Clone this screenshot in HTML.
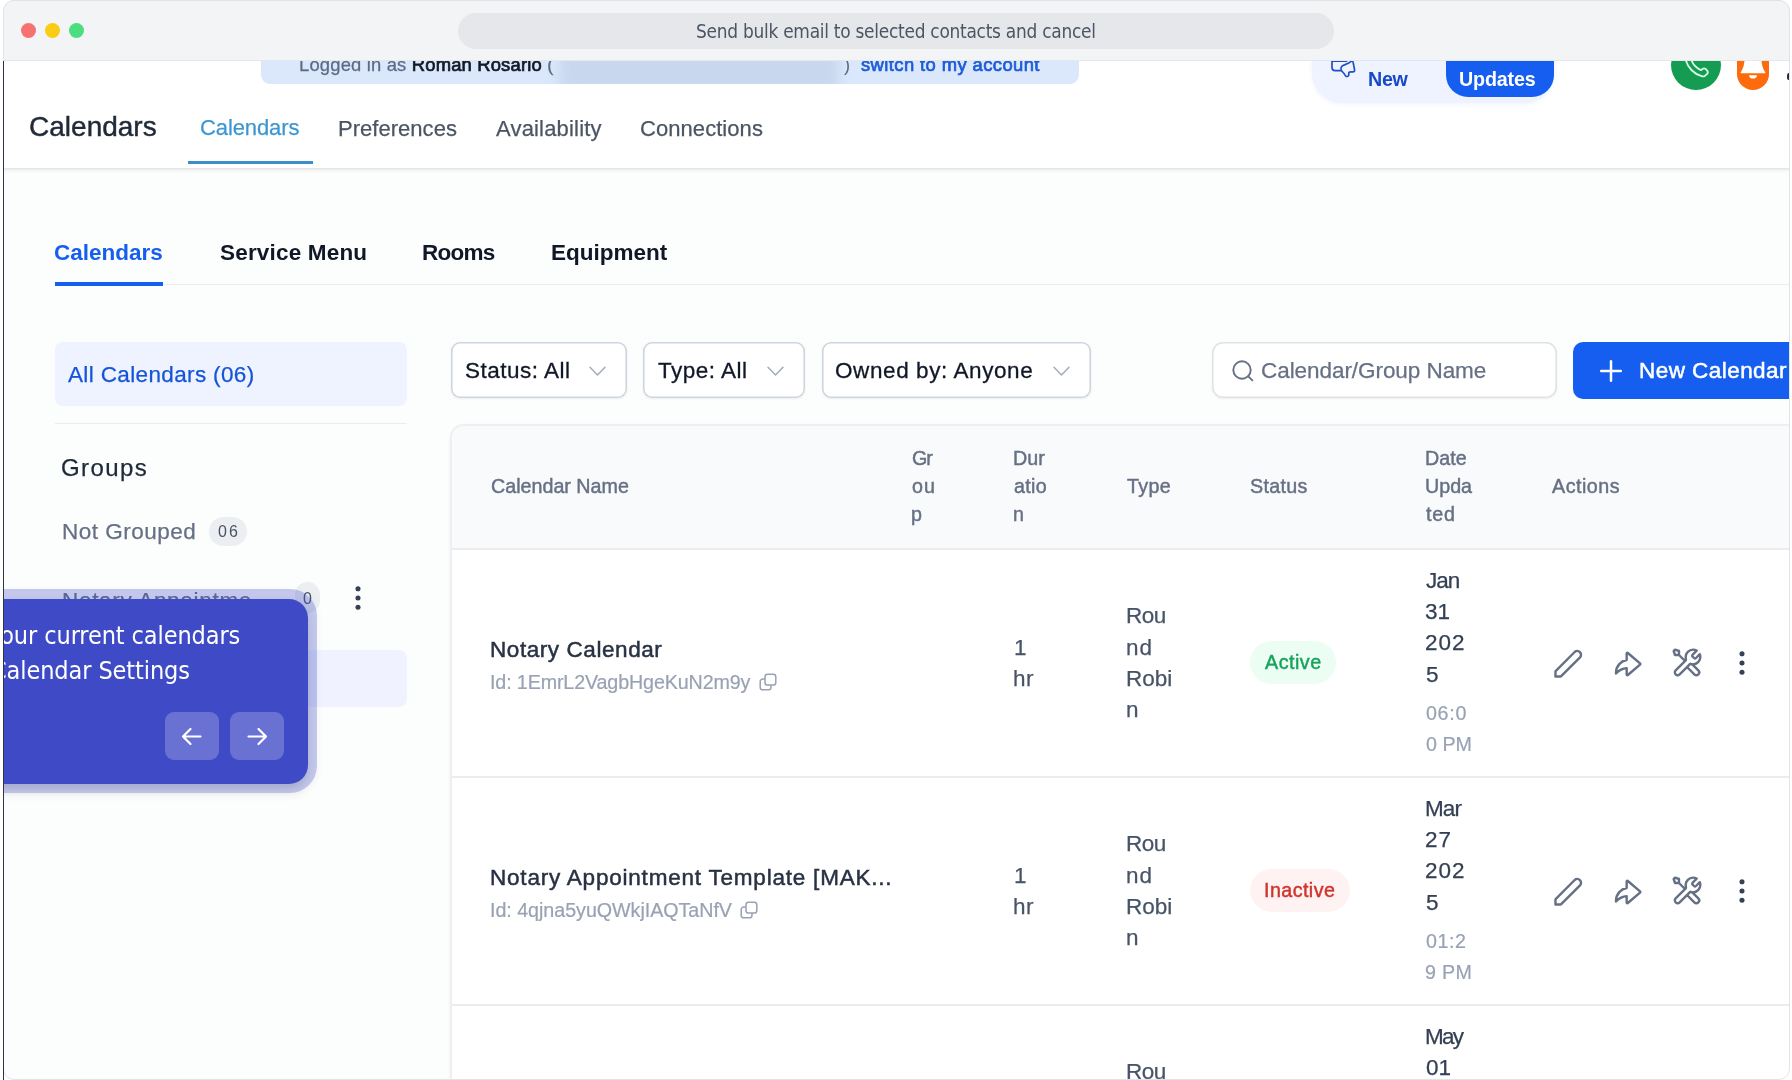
<!DOCTYPE html>
<html lang="en">
<head>
<meta charset="utf-8">
<title>Calendars</title>
<style>
*{box-sizing:border-box;margin:0;padding:0}
html,body{width:1792px;height:1080px;overflow:hidden;background:#fff}
body{font-family:"Liberation Sans",sans-serif;color:#101828;position:relative}
.abs{position:absolute}
.t{position:absolute;white-space:nowrap;line-height:1;will-change:transform}
#win{position:absolute;left:0;top:0;width:1792px;height:1080px;overflow:hidden;background:#fcfdfd}
#frame{position:absolute;left:2.6px;top:0;width:1787.4px;height:1080px;border:1px solid #e1e3e8;border-radius:11px;box-shadow:0 0 0 12px #fff;pointer-events:none}
#titlebar{position:absolute;left:0;top:0;width:100%;height:61px;background:#f3f4f6;border-bottom:1px solid #e5e7eb}
.dot{position:absolute;top:22.8px;width:15px;height:15px;border-radius:50%}
#url{position:absolute;left:458px;top:13px;width:876px;height:35.7px;border-radius:18px;background:#e5e7eb}
#lborder{position:absolute;left:3px;top:61px;width:1.3px;height:1020px;background:#2f3441}
#hdr{position:absolute;left:0;top:60px;width:100%;height:107.5px;background:#fff;box-shadow:0 1px 3px rgba(16,24,40,.10),0 2px 6px rgba(16,24,40,.05)}

.rb{font-family:"Liberation Sans",sans-serif}
#loginbar{position:absolute;left:261px;top:40px;width:817.5px;height:44px;background:#dbe8fb;border-radius:0 0 9px 9px;overflow:hidden}
#blur{position:absolute;left:298px;top:10px;width:280px;height:42px;background:#c9d7ee;filter:blur(6px);border-radius:10px}
#pill{position:absolute;left:1312px;top:30px;width:242px;height:72.5px;background:#eef3ff;border-radius:30px;box-shadow:0 1px 4px rgba(21,94,239,.08)}
#upd{position:absolute;left:1446px;top:30px;width:108px;height:67px;background:#155eef;border-radius:22px}
#green{position:absolute;left:1671px;top:40.2px;width:50px;height:50px;border-radius:50%;background:#139c52}
#orange{position:absolute;left:1737px;top:40.2px;width:32px;height:50px;border-radius:0 0 16px 16px;background:#fd6b0d}
.tab1{color:#4b5563;font-size:22px;-webkit-text-stroke:.25px currentColor}
#tabline{position:absolute;left:188px;top:161px;width:125px;height:3.3px;background:#3b8ec8}
.sub{font-weight:bold;font-size:22.5px;color:#101828}
#subline{position:absolute;left:55px;top:284px;width:1740px;height:1px;background:#eaecf0}
#subact{position:absolute;left:55px;top:282px;width:108px;height:3.5px;background:#155eef}

#allcal{position:absolute;left:55px;top:342px;width:352px;height:64px;border-radius:8px;background:#eef3ff}
#ldiv{position:absolute;left:55px;top:423px;width:352px;height:1px;background:#eaecf0}
.badge{position:absolute;background:#eceef2;border-radius:15px}
#selrow{position:absolute;left:55px;top:650px;width:352px;height:57px;border-radius:8px;background:#f0f3ff}
.vd{position:absolute;width:5.4px;height:5.4px;border-radius:50%;background:#344054}
.fbox{position:absolute;top:342px;height:56.4px;border-radius:9px;background:#fff;box-shadow:inset 0 0 0 1.6px #d0d5dd,0 1px 2.5px rgba(16,24,40,.07)}
.ftxt{-webkit-text-stroke:.3px currentColor;font-size:22.5px;color:#101828}
#newcal{position:absolute;left:1573px;top:342px;width:230px;height:57px;border-radius:10px;background:#155eef}
#table{position:absolute;left:450px;top:424px;width:1345px;height:700px;border:2px solid #edeff2;border-radius:14px 0 0 0;background:#fff;overflow:hidden;box-shadow:0 1px 3px rgba(16,24,40,.06)}
#thead{position:absolute;left:0;top:0;width:100%;height:124px;background:#f9fafb;border-bottom:2px solid #ececef}
.rsep{position:absolute;left:452px;width:1340px;height:2px;background:#ececef}
.th{font-size:19.7px;color:#667085;-webkit-text-stroke:.45px #667085}
.c{-webkit-text-stroke:.25px currentColor;font-size:22.5px;color:#475467}
.nm{font-size:22.5px;color:#283243;-webkit-text-stroke:.5px #283243}
.id{-webkit-text-stroke:.2px currentColor;font-size:19.7px;color:#98a2b3}
.d{-webkit-text-stroke:.25px currentColor;font-size:22.5px;color:#344054}
.tm{-webkit-text-stroke:.2px currentColor;font-size:19.7px;color:#98a2b3}
.pillA{position:absolute;left:1250px;width:86px;height:43px;border-radius:22px;background:#ecfdf3}
.pillI{position:absolute;left:1250px;width:100px;height:43px;border-radius:22px;background:#fef3f2}
.ic{position:absolute;overflow:visible}
#halo{position:absolute;left:-40px;top:589.2px;width:357px;height:203.500px;border-radius:27px;background:rgba(63,75,198,.30);box-shadow:0 3px 8px rgba(16,24,40,.05)}
#tip{position:absolute;left:-40px;top:599px;width:348.2px;height:185.2px;border-radius:19px;background:#3f4bc6;box-shadow:0 5px 9px rgba(20,20,40,.16)}
.tipt{font-family:"DejaVu Sans Condensed","DejaVu Sans",sans-serif;color:#fff;font-size:25px;letter-spacing:-.1px}
.tbtn{position:absolute;top:712px;width:54px;height:48px;border-radius:9px;background:rgba(255,255,255,.22)}
#clipl{position:absolute;left:0;top:60px;width:3px;height:1020px;background:#fff}
</style>
</head>
<body>
<div id="win">
  <!-- app header -->
  <div id="hdr"></div>

  <div id="loginbar"><div id="blur"></div></div>
  <span class="t" id="m_log1" style="-webkit-text-stroke:.25px currentColor;left:299.0px;top:55.7px;font-size:18.4px;color:#5b6b85;letter-spacing:0.18px">Logged in as <span style="color:#111827;-webkit-text-stroke:.7px #111827">Roman Rosario</span> (</span>
  <span class="t" id="m_log2" style="left:843.6px;top:55.7px;font-size:18.4px;color:#5b6b85">)</span>
  <span class="t" id="m_log3" style="left:860.5px;top:55.7px;font-size:18.4px;color:#1d5bd8;-webkit-text-stroke:.7px #1d5bd8;letter-spacing:0.41px">switch to my account</span>
  <div id="pill"></div>
  <div id="upd"></div>
  <span class="t" id="m_new" style="left:1368.0px;top:69.9px;font-size:19.7px;color:#1849c6;font-weight:bold;letter-spacing:-0.29px">New</span>
  <span class="t" id="m_upd" style="left:1458.5px;top:69.9px;font-size:19.7px;color:#fff;font-weight:bold;letter-spacing:-0.16px">Updates</span>
  <div id="green"></div>
  <div id="orange"></div>
  <svg class="ic" style="left:1681.6px;top:50.6px" width="28.8" height="28.8" viewBox="0 0 24 24"><path d="M8.38028 8.85335C9.07627 10.303 10.0251 11.6616 11.2266 12.8632C12.4282 14.0648 13.7869 15.0136 15.2365 15.7096C15.3612 15.7694 15.4235 15.7994 15.5024 15.8224C15.7828 15.9041 16.127 15.8454 16.3644 15.6754C16.4313 15.6275 16.4884 15.5704 16.6027 15.4561C16.9523 15.1064 17.1271 14.9316 17.3029 14.8174C17.9658 14.3864 18.8204 14.3864 19.4833 14.8174C19.6591 14.9316 19.8339 15.1064 20.1835 15.4561L20.3783 15.6509C20.9098 16.1824 21.1755 16.4481 21.3198 16.7335C21.6069 17.301 21.6069 17.9713 21.3198 18.5389C21.1755 18.8242 20.9098 19.09 20.3783 19.6214L20.2207 19.779C19.6911 20.3087 19.4263 20.5735 19.0662 20.7757C18.6667 21.0001 18.0462 21.1615 17.588 21.1601C17.1751 21.1589 16.8928 21.0788 16.3284 20.9186C13.295 20.0576 10.4326 18.4332 8.04466 16.0452C5.65668 13.6572 4.03221 10.7948 3.17124 7.76144C3.01103 7.19699 2.93092 6.91477 2.9297 6.50182C2.92833 6.0436 3.08969 5.42311 3.31411 5.0236C3.51636 4.66357 3.78117 4.39876 4.3108 3.86913L4.46843 3.7115C4.99987 3.18006 5.2656 2.91433 5.55098 2.76999C6.11854 2.48292 6.7888 2.48292 7.35636 2.76999C7.64174 2.91433 7.90747 3.18006 8.43891 3.7115L8.63378 3.90637C8.98338 4.25597 9.15819 4.43078 9.27247 4.60655C9.70347 5.26945 9.70347 6.12403 9.27247 6.78692C9.15819 6.96269 8.98338 7.1375 8.63378 7.4871C8.51947 7.60142 8.46231 7.65857 8.41447 7.72538C8.24446 7.96281 8.18576 8.30707 8.26748 8.58743C8.29048 8.66632 8.32041 8.72866 8.38028 8.85335Z" fill="none" stroke="#d9fbe6" stroke-width="1.5" stroke-linejoin="round"/></svg>
  <svg class="ic" style="left:1736px;top:40px" width="34" height="44" viewBox="1736 40 34 44"><path d="M1744.8 58C1745.5 48 1749 44 1753 44S1760.500 48 1761.200 58C1761.800 66 1763.500 70 1765.300 72.200V73.300H1740.700V72.200C1742.500 70 1744.200 66 1744.800 58Z" fill="#fff"/><path d="M1749 75.200H1757C1757 77.200 1755.300 78.600 1753 78.600S1749 77.200 1749 75.200Z" fill="#fff"/></svg>
  <svg class="ic" style="left:1326px;top:56px" width="34" height="26" viewBox="1326 56 34 26"><path d="M1346.500 61.200H1332V67.500Q1332 70.700 1335.200 70.700H1341" fill="none" stroke="#1f4fc4" stroke-width="1.7" stroke-linecap="round"/><path d="M1341.300 70.500C1339.800 67 1342.500 65.300 1345 64.600C1348 63.600 1350 62.300 1351.200 61.400C1352 60.800 1353 61.200 1353.100 62.200L1354.600 70C1354.800 71.200 1354 72 1352.800 71.900C1351 71.700 1349.500 71.800 1349 72.300C1348.500 73 1349 74.200 1348.700 75.200C1348.200 76.800 1346.200 77 1345.400 75.600C1344.500 74 1343.500 72.700 1341.300 70.500Z" fill="#eef3ff" stroke="#1f4fc4" stroke-width="1.7" stroke-linejoin="round"/></svg>
  <div style="position:absolute;left:1787px;top:72.500px;width:3px;height:7px;border-radius:50%;background:#1f2937"></div>
  <span class="t" id="m_title" style="left:29.0px;top:113.1px;font-size:28px;color:#1f2937;-webkit-text-stroke:.45px #1f2937;letter-spacing:0.01px">Calendars</span>
  <span class="t tab1" id="m_tab1" style="left:200.0px;top:117.2px;color:#3e96d1;letter-spacing:-0.11px">Calendars</span>
  <span class="t tab1" id="m_tab2" style="left:338.4px;top:118.2px;letter-spacing:0.03px">Preferences</span>
  <span class="t tab1" id="m_tab3" style="left:496.0px;top:118.2px;letter-spacing:0.18px">Availability</span>
  <span class="t tab1" id="m_tab4" style="left:639.5px;top:118.2px;letter-spacing:0.06px">Connections</span>
  <div id="tabline"></div>
  <div id="subline"></div>
  <div id="subact"></div>
  <span class="t sub" id="m_sub1" style="left:54.0px;top:241.8px;color:#155eef;letter-spacing:-0.00px">Calendars</span>
  <span class="t sub" id="m_sub2" style="left:220.0px;top:241.8px;letter-spacing:0.18px">Service Menu</span>
  <span class="t sub" id="m_sub3" style="left:422.0px;top:241.8px;letter-spacing:-0.75px">Rooms</span>
  <span class="t sub" id="m_sub4" style="left:551.0px;top:241.8px;letter-spacing:-0.01px">Equipment</span>

  <!-- left panel -->
  <div id="allcal"></div>
  <span class="t" id="m_all" style="-webkit-text-stroke:.25px currentColor;left:68.0px;top:364.3px;font-size:22.5px;color:#1554d8;letter-spacing:0.36px">All Calendars (06)</span>
  <div id="ldiv"></div>
  <span class="t" id="m_groups" style="-webkit-text-stroke:.25px currentColor;left:61.0px;top:455.7px;font-size:24px;color:#1d2939;letter-spacing:1.40px">Groups</span>
  <span class="t" id="m_ng" style="-webkit-text-stroke:.25px currentColor;left:62.0px;top:520.8px;font-size:22.5px;color:#667085;letter-spacing:0.50px">Not Grouped</span>
  <div class="badge" style="left:209px;top:517px;width:38px;height:29px"></div>
  <span class="t" id="m_b06" style="left:218.0px;top:523.5px;font-size:16px;color:#475467;letter-spacing:2.00px">06</span>
  <span class="t" id="m_na" style="-webkit-text-stroke:.25px currentColor;left:62.0px;top:589.8px;font-size:22.5px;color:#667085;letter-spacing:0.7px">Notary Appointme</span>
  <div class="badge" style="left:295px;top:582px;width:25px;height:31px"></div>
  <span class="t" id="m_b0" style="left:302.5px;top:590.8px;font-size:16px;color:#475467">0</span>
  <svg class="ic" style="left:342px;top:582.400px" width="32" height="32" fill="#344054" viewBox="0 0 24 24"><circle cx="12" cy="5" r="1.9"/><circle cx="12" cy="12" r="1.9"/><circle cx="12" cy="19" r="1.9"/></svg>
  <div id="selrow"></div>

  <!-- filters -->
  <div class="fbox" style="left:451px;width:176px"></div>
  <span class="t ftxt" id="m_f1" style="left:465.0px;top:359.8px;letter-spacing:0.50px">Status: All</span>
  <svg class="ic" style="left:589px;top:366px" width="17" height="11" viewBox="0 0 17 11"><path d="M1 1.2 8.5 9 16 1.2" fill="none" stroke="#a4acb9" stroke-width="1.5" stroke-linecap="round" stroke-linejoin="round"/></svg>
  <div class="fbox" style="left:643px;width:162px"></div>
  <span class="t ftxt" id="m_f2" style="left:658.0px;top:359.8px;letter-spacing:0.50px">Type: All</span>
  <svg class="ic" style="left:767px;top:366px" width="17" height="11" viewBox="0 0 17 11"><path d="M1 1.2 8.5 9 16 1.2" fill="none" stroke="#a4acb9" stroke-width="1.5" stroke-linecap="round" stroke-linejoin="round"/></svg>
  <div class="fbox" style="left:822px;width:269px"></div>
  <span class="t ftxt" id="m_f3" style="left:835.0px;top:359.8px;letter-spacing:0.59px">Owned by: Anyone</span>
  <svg class="ic" style="left:1053px;top:366px" width="17" height="11" viewBox="0 0 17 11"><path d="M1 1.2 8.5 9 16 1.2" fill="none" stroke="#a4acb9" stroke-width="1.5" stroke-linecap="round" stroke-linejoin="round"/></svg>
  <div class="fbox" style="left:1212px;width:345px;border-radius:11px;box-shadow:inset 0 0 0 1.6px #dfe2e7,0 1px 2.5px rgba(16,24,40,.06)"></div>
  <svg class="ic" style="left:1231px;top:359px" width="24" height="24" viewBox="0 0 24 24"><circle cx="11" cy="11" r="8.7" fill="none" stroke="#667085" stroke-width="1.9"/><path d="M17.3 17.3 21.3 21.3" stroke="#667085" stroke-width="1.9" stroke-linecap="round"/></svg>
  <span class="t" id="m_ph" style="-webkit-text-stroke:.25px currentColor;left:1261.0px;top:359.8px;font-size:22.5px;color:#667085;letter-spacing:-0.06px">Calendar/Group Name</span>
  <div id="newcal"></div>
  <svg class="ic" style="left:1599px;top:359px" width="24" height="24" viewBox="0 0 24 24"><path d="M12 2.200v19.600M2.200 12h19.600" stroke="#fff" stroke-width="2.5" stroke-linecap="round"/></svg>
  <span class="t" id="m_nc" style="left:1638.7px;top:359.8px;font-size:22.5px;color:#fff;-webkit-text-stroke:.5px #fff;letter-spacing:0.45px">New Calendar</span>

  <!-- table -->
  <div id="table"><div id="thead"></div></div>
  <div class="rsep" style="top:776px"></div>
  <div class="rsep" style="top:1004px"></div>
  <span class="t th" id="m_h1" style="left:491.0px;top:477.1px;letter-spacing:0.00px">Calendar Name</span>
  <span class="t th" id="m_h2a" style="left:912.0px;top:449.1px;letter-spacing:-1.00px">Gr</span>
  <span class="t th" id="m_h2b" style="left:912.0px;top:477.1px;letter-spacing:1.00px">ou</span>
  <span class="t th" id="m_h2c" style="left:911.0px;top:505.1px">p</span>
  <span class="t th" id="m_h3a" style="left:1013.0px;top:449.1px;letter-spacing:0.00px">Dur</span>
  <span class="t th" id="m_h3b" style="left:1014.0px;top:477.1px;letter-spacing:0.33px">atio</span>
  <span class="t th" id="m_h3c" style="left:1013.0px;top:505.1px">n</span>
  <span class="t th" id="m_h4" style="left:1127.0px;top:477.1px;letter-spacing:0.34px">Type</span>
  <span class="t th" id="m_h5" style="left:1250.0px;top:477.1px;letter-spacing:0.30px">Status</span>
  <span class="t th" id="m_h6a" style="left:1425.0px;top:449.1px;letter-spacing:0.00px">Date</span>
  <span class="t th" id="m_h6b" style="left:1425.0px;top:477.1px;letter-spacing:-0.00px">Upda</span>
  <span class="t th" id="m_h6c" style="left:1426.0px;top:505.1px;letter-spacing:0.80px">ted</span>
  <span class="t th" id="m_h7" style="left:1552.0px;top:477.1px;letter-spacing:0.50px">Actions</span>

  <!-- row 1 -->
  <span class="t nm" id="m_r1nm" style="left:490.0px;top:639.2px;letter-spacing:0.57px">Notary Calendar</span>
  <span class="t id" id="m_r1id" style="left:490.0px;top:673.1px;letter-spacing:-0.13px">Id: 1EmrL2VagbHgeKuN2m9y</span>
  <span class="t c" id="m_r1d1" style="left:1014.0px;top:636.8px">1</span>
  <span class="t c" id="m_r1d2" style="left:1013.0px;top:668.0px;letter-spacing:0.50px">hr</span>
  <span class="t c" id="m_r1t1" style="left:1126.0px;top:605.0px;letter-spacing:-0.50px">Rou</span>
  <span class="t c" id="m_r1t2" style="left:1126.0px;top:636.8px;letter-spacing:1.00px">nd</span>
  <span class="t c" id="m_r1t3" style="left:1126.0px;top:668.0px;letter-spacing:0.00px">Robi</span>
  <span class="t c" id="m_r1t4" style="left:1126.0px;top:699.3px">n</span>
  <div class="pillA" style="top:641px"></div>
  <span class="t" id="m_r1st" style="left:1265.0px;top:652.9px;font-size:19.7px;color:#17a35b;-webkit-text-stroke:.45px #17a35b;letter-spacing:0.50px">Active</span>
  <span class="t d" id="m_r1a" style="left:1426.0px;top:569.8px;letter-spacing:-1.00px">Jan</span>
  <span class="t d" id="m_r1b" style="left:1425.0px;top:601.0px;letter-spacing:0.00px">31</span>
  <span class="t d" id="m_r1c" style="left:1425.0px;top:632.3px;letter-spacing:1.00px">202</span>
  <span class="t d" id="m_r1e" style="left:1426.0px;top:663.5px">5</span>
  <span class="t tm" id="m_r1f" style="left:1426.0px;top:703.6px;letter-spacing:0.67px">06:0</span>
  <span class="t tm" id="m_r1g" style="left:1426.0px;top:734.9px;letter-spacing:-0.00px">0 PM</span>

  <!-- row 2 -->
  <span class="t nm" id="m_r2nm" style="left:490.0px;top:867.2px;letter-spacing:0.79px">Notary Appointment Template [MAK...</span>
  <span class="t id" id="m_r2id" style="left:490.0px;top:901.1px;letter-spacing:-0.04px">Id: 4qjna5yuQWkjIAQTaNfV</span>
  <span class="t c" id="m_r2d1" style="left:1014.0px;top:864.8px">1</span>
  <span class="t c" id="m_r2d2" style="left:1013.0px;top:896.0px;letter-spacing:0.50px">hr</span>
  <span class="t c" id="m_r2t1" style="left:1126.0px;top:833.0px;letter-spacing:-0.50px">Rou</span>
  <span class="t c" id="m_r2t2" style="left:1126.0px;top:864.8px;letter-spacing:1.00px">nd</span>
  <span class="t c" id="m_r2t3" style="left:1126.0px;top:896.0px;letter-spacing:0.00px">Robi</span>
  <span class="t c" id="m_r2t4" style="left:1126.0px;top:927.3px">n</span>
  <div class="pillI" style="top:869px"></div>
  <span class="t" id="m_r2st" style="left:1264.0px;top:880.9px;font-size:19.7px;color:#d0342c;-webkit-text-stroke:.45px #d0342c;letter-spacing:0.43px">Inactive</span>
  <span class="t d" id="m_r2a" style="left:1425.0px;top:797.8px;letter-spacing:-0.90px">Mar</span>
  <span class="t d" id="m_r2b" style="left:1425.0px;top:829.0px;letter-spacing:1.00px">27</span>
  <span class="t d" id="m_r2c" style="left:1425.0px;top:860.3px;letter-spacing:1.00px">202</span>
  <span class="t d" id="m_r2e" style="left:1426.0px;top:891.5px">5</span>
  <span class="t tm" id="m_r2f" style="left:1426.0px;top:931.6px;letter-spacing:0.55px">01:2</span>
  <span class="t tm" id="m_r2g" style="left:1425.0px;top:962.9px;letter-spacing:0.34px">9 PM</span>

  <!-- row 3 -->
  <span class="t c" id="m_r3t1" style="left:1126.0px;top:1061.0px;letter-spacing:-0.50px">Rou</span>
  <span class="t d" id="m_r3a" style="left:1425.0px;top:1025.8px;letter-spacing:-1.70px">May</span>
  <span class="t d" id="m_r3b" style="left:1426.0px;top:1057.0px;letter-spacing:0.00px">01</span>
  <svg class="ic" style="left:1551.5px;top:648px;color:#667085" width="32" height="32" viewBox="0 0 24 24"><path d="M2.6 21.4V17.6Q2.6 17.4 2.9 17.1L17 3A2.83 2.83 0 0 1 21 7L6.9 21.1Q6.6 21.4 6.4 21.4Z" fill="none" stroke="currentColor" stroke-width="1.8" stroke-linecap="round" stroke-linejoin="round"/></svg>
  <svg class="ic" style="left:1611.5px;top:647.5px;color:#667085" width="32" height="32" viewBox="0 0 24 24"><path d="M20.7914 12.6075C21.0355 12.3982 21.1575 12.2936 21.2023 12.1691C21.2415 12.0598 21.2415 11.9403 21.2023 11.831C21.1575 11.7065 21.0355 11.6019 20.7914 11.3926L12.3206 4.13202C11.9004 3.77182 11.6903 3.59172 11.5124 3.58731C11.3578 3.58348 11.2101 3.6514 11.1124 3.77128C11 3.90921 11 4.18595 11 4.73942V9.03468C8.86532 9.40813 6.91159 10.4898 5.45971 12.1139C3.87682 13.8846 3.00123 16.176 3 18.551V19.163C4.04934 17.8989 5.35951 16.8766 6.84076 16.166C8.1467 15.5395 9.55842 15.1684 11 15.0706V19.2607C11 19.8141 11 20.0909 11.1124 20.2288C11.2101 20.3487 11.3578 20.4166 11.5124 20.4128C11.6903 20.4084 11.9004 20.2283 12.3206 19.8681L20.7914 12.6075Z" fill="none" stroke="currentColor" stroke-width="1.8" stroke-linecap="round" stroke-linejoin="round"/></svg>
  <svg class="ic" style="left:1671px;top:647px;color:#667085" width="32" height="32" viewBox="0 0 24 24"><path d="M6 6L10.5 10.5M6 6H3L2 3L3 2L6 3V6ZM19.259 2.74101L16.6314 5.36863C16.2354 5.76465 16.0373 5.96265 15.9632 6.19098C15.8979 6.39183 15.8979 6.60817 15.9632 6.80902C16.0373 7.03735 16.2354 7.23535 16.6314 7.63137L16.8686 7.86863C17.2646 8.26465 17.4627 8.46265 17.691 8.53684C17.8918 8.6021 18.1082 8.6021 18.309 8.53684C18.5373 8.46265 18.7354 8.26465 19.1314 7.86863L21.5893 5.41072C21.854 6.05488 22 6.76039 22 7.5C22 10.5376 19.5376 13 16.5 13C16.1338 13 15.7759 12.9642 15.4298 12.8959C14.9436 12.8001 14.7005 12.7521 14.5532 12.7668C14.3965 12.7824 14.3193 12.8059 14.1805 12.8802C14.0499 12.9501 13.9189 13.0811 13.657 13.343L6.5 20.5C5.67157 21.3284 4.32843 21.3284 3.5 20.5C2.67157 19.6716 2.67157 18.3284 3.5 17.5L10.657 10.343C10.9189 10.0811 11.0499 9.95005 11.1198 9.81949C11.1941 9.68068 11.2176 9.60347 11.2332 9.44681C11.2479 9.29945 11.1999 9.05638 11.1041 8.57024C11.0358 8.22406 11 7.86621 11 7.5C11 4.46243 13.4624 2 16.5 2C17.5055 2 18.448 2.26982 19.259 2.74101ZM12.0001 14.9999L17.5 20.4999C18.3284 21.3283 19.6716 21.3283 20.5 20.4999C21.3284 19.6715 21.3284 18.3283 20.5 17.4999L15.9753 12.9753C15.655 12.945 15.3427 12.8872 15.0408 12.8043C14.6517 12.6975 14.2249 12.775 13.9397 13.0603L12.0001 14.9999Z" fill="none" stroke="currentColor" stroke-width="1.8" stroke-linecap="round" stroke-linejoin="round"/></svg>
  <svg class="ic" style="left:1726.2px;top:647px;color:#344054" width="32" height="32" fill="#344054" viewBox="0 0 24 24"><circle cx="12" cy="5" r="1.9"/><circle cx="12" cy="12" r="1.9"/><circle cx="12" cy="19" r="1.9"/></svg>
  <svg class="ic" style="left:1551.5px;top:876px;color:#667085" width="32" height="32" viewBox="0 0 24 24"><path d="M2.6 21.4V17.6Q2.6 17.4 2.9 17.1L17 3A2.83 2.83 0 0 1 21 7L6.9 21.1Q6.6 21.4 6.4 21.4Z" fill="none" stroke="currentColor" stroke-width="1.8" stroke-linecap="round" stroke-linejoin="round"/></svg>
  <svg class="ic" style="left:1611.5px;top:875.5px;color:#667085" width="32" height="32" viewBox="0 0 24 24"><path d="M20.7914 12.6075C21.0355 12.3982 21.1575 12.2936 21.2023 12.1691C21.2415 12.0598 21.2415 11.9403 21.2023 11.831C21.1575 11.7065 21.0355 11.6019 20.7914 11.3926L12.3206 4.13202C11.9004 3.77182 11.6903 3.59172 11.5124 3.58731C11.3578 3.58348 11.2101 3.6514 11.1124 3.77128C11 3.90921 11 4.18595 11 4.73942V9.03468C8.86532 9.40813 6.91159 10.4898 5.45971 12.1139C3.87682 13.8846 3.00123 16.176 3 18.551V19.163C4.04934 17.8989 5.35951 16.8766 6.84076 16.166C8.1467 15.5395 9.55842 15.1684 11 15.0706V19.2607C11 19.8141 11 20.0909 11.1124 20.2288C11.2101 20.3487 11.3578 20.4166 11.5124 20.4128C11.6903 20.4084 11.9004 20.2283 12.3206 19.8681L20.7914 12.6075Z" fill="none" stroke="currentColor" stroke-width="1.8" stroke-linecap="round" stroke-linejoin="round"/></svg>
  <svg class="ic" style="left:1671px;top:875px;color:#667085" width="32" height="32" viewBox="0 0 24 24"><path d="M6 6L10.5 10.5M6 6H3L2 3L3 2L6 3V6ZM19.259 2.74101L16.6314 5.36863C16.2354 5.76465 16.0373 5.96265 15.9632 6.19098C15.8979 6.39183 15.8979 6.60817 15.9632 6.80902C16.0373 7.03735 16.2354 7.23535 16.6314 7.63137L16.8686 7.86863C17.2646 8.26465 17.4627 8.46265 17.691 8.53684C17.8918 8.6021 18.1082 8.6021 18.309 8.53684C18.5373 8.46265 18.7354 8.26465 19.1314 7.86863L21.5893 5.41072C21.854 6.05488 22 6.76039 22 7.5C22 10.5376 19.5376 13 16.5 13C16.1338 13 15.7759 12.9642 15.4298 12.8959C14.9436 12.8001 14.7005 12.7521 14.5532 12.7668C14.3965 12.7824 14.3193 12.8059 14.1805 12.8802C14.0499 12.9501 13.9189 13.0811 13.657 13.343L6.5 20.5C5.67157 21.3284 4.32843 21.3284 3.5 20.5C2.67157 19.6716 2.67157 18.3284 3.5 17.5L10.657 10.343C10.9189 10.0811 11.0499 9.95005 11.1198 9.81949C11.1941 9.68068 11.2176 9.60347 11.2332 9.44681C11.2479 9.29945 11.1999 9.05638 11.1041 8.57024C11.0358 8.22406 11 7.86621 11 7.5C11 4.46243 13.4624 2 16.5 2C17.5055 2 18.448 2.26982 19.259 2.74101ZM12.0001 14.9999L17.5 20.4999C18.3284 21.3283 19.6716 21.3283 20.5 20.4999C21.3284 19.6715 21.3284 18.3283 20.5 17.4999L15.9753 12.9753C15.655 12.945 15.3427 12.8872 15.0408 12.8043C14.6517 12.6975 14.2249 12.775 13.9397 13.0603L12.0001 14.9999Z" fill="none" stroke="currentColor" stroke-width="1.8" stroke-linecap="round" stroke-linejoin="round"/></svg>
  <svg class="ic" style="left:1726.2px;top:875px;color:#344054" width="32" height="32" fill="#344054" viewBox="0 0 24 24"><circle cx="12" cy="5" r="1.9"/><circle cx="12" cy="12" r="1.9"/><circle cx="12" cy="19" r="1.9"/></svg>
  <svg class="ic" style="left:759px;top:673px;color:#98a2b3" width="18" height="18" viewBox="0 0 18 18"><rect x="6" y="1.2" width="10.8" height="10.8" rx="2.6" fill="none" stroke="currentColor" stroke-width="1.5"/><path d="M6 6H3.8A2.6 2.6 0 0 0 1.2 8.6V14.2A2.6 2.6 0 0 0 3.8 16.8H9.4A2.6 2.6 0 0 0 12 14.2V12" fill="none" stroke="currentColor" stroke-width="1.5"/></svg>
  <svg class="ic" style="left:740px;top:901px;color:#98a2b3" width="18" height="18" viewBox="0 0 18 18"><rect x="6" y="1.2" width="10.8" height="10.8" rx="2.6" fill="none" stroke="currentColor" stroke-width="1.5"/><path d="M6 6H3.8A2.6 2.6 0 0 0 1.2 8.6V14.2A2.6 2.6 0 0 0 3.8 16.8H9.4A2.6 2.6 0 0 0 12 14.2V12" fill="none" stroke="currentColor" stroke-width="1.5"/></svg>
  <!-- tooltip -->
  <div id="halo"></div>
  <div id="tip"></div>
  <span class="t tipt" id="m_tip1" style="left:-13.4px;top:622.6px">your current calendars</span>
  <span class="t tipt" id="m_tip2" style="left:-9.0px;top:658.1px">Calendar Settings</span>
  <div class="tbtn" style="left:165px"></div>
  <div class="tbtn" style="left:230px"></div>
  <svg class="ic" style="left:180px;top:725px" width="23" height="23" viewBox="0 0 23 23"><path d="M20.5 11.5H3M10.5 4 3 11.5 10.5 19" fill="none" stroke="#fff" stroke-width="2.2" stroke-linecap="round" stroke-linejoin="round"/></svg>
  <svg class="ic" style="left:246px;top:725px" width="23" height="23" viewBox="0 0 23 23"><path d="M2.5 11.5H20M12.5 4 20 11.5 12.5 19" fill="none" stroke="#fff" stroke-width="2.2" stroke-linecap="round" stroke-linejoin="round"/></svg>
  <div id="clipl"></div>
  <!-- title bar -->
  <div id="titlebar">
    <div class="dot" style="left:21px;background:#f87171"></div>
    <div class="dot" style="left:45px;background:#facc15"></div>
    <div class="dot" style="left:69px;background:#4ade80"></div>
    <div id="url"></div>
    <span class="t" id="m_url" style="left:696.0px;top:22.0px;font-size:18.9px;color:#4b5563;font-family:'DejaVu Sans Condensed','DejaVu Sans',sans-serif;letter-spacing:-0.26px">Send bulk email to selected contacts and cancel</span>
  </div>
  <div id="frame"></div>
  <div id="lborder"></div>
</div>
</body>
</html>
